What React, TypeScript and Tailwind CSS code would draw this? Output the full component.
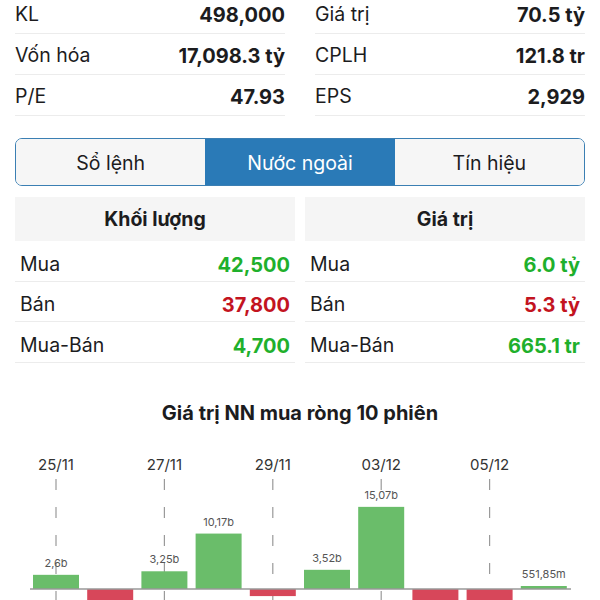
const stats = [
  [
    { label: 'KL', value: '498,000' },
    { label: 'Vốn hóa', value: '17,098.3 tỷ' },
    { label: 'P/E', value: '47.93' },
  ],
  [
    { label: 'Giá trị', value: '70.5 tỷ' },
    { label: 'CPLH', value: '121.8 tr' },
    { label: 'EPS', value: '2,929' },
  ],
];

const tabs = ['Sổ lệnh', 'Nước ngoài', 'Tín hiệu'];

type Row = { label: string; value: string; up: boolean };

const tables: { title: string; rows: Row[] }[] = [
  {
    title: 'Khối lượng',
    rows: [
      { label: 'Mua', value: '42,500', up: true },
      { label: 'Bán', value: '37,800', up: false },
      { label: 'Mua-Bán', value: '4,700', up: true },
    ],
  },
  {
    title: 'Giá trị',
    rows: [
      { label: 'Mua', value: '6.0 tỷ', up: true },
      { label: 'Bán', value: '5.3 tỷ', up: false },
      { label: 'Mua-Bán', value: '665.1 tr', up: true },
    ],
  },
];

const rowHeights = ['h-[41px]', 'h-[40px]', 'h-[41px]'];

const bars = [
  { v: 2.6, label: '2,6b' },
  { v: -4.2, label: '' },
  { v: 3.25, label: '3,25b' },
  { v: 10.17, label: '10,17b' },
  { v: -1.3, label: '' },
  { v: 3.52, label: '3,52b' },
  { v: 15.07, label: '15,07b' },
  { v: -4.8, label: '' },
  { v: -3.9, label: '' },
  { v: 0.55, label: '551,85m' },
];

const dates = ['25/11', '27/11', '29/11', '03/12', '05/12'];

function NetChart() {
  const zero = 157;
  const scale = 5.45;
  const step = 54.2;
  const barW = 46;
  return (
    <svg width={600} height={170} viewBox="0 0 600 170" className="block">
      {dates.map((d, i) => {
        const x = 56 + step * 2 * i;
        return (
          <g key={d}>
            <text x={x} y={38} textAnchor="middle" fontSize={15} fill="#333">
              {d}
            </text>
            <line x1={x} y1={47} x2={x} y2={170} stroke="#9a9a9a" strokeWidth={1.2} strokeDasharray="11 17" />
          </g>
        );
      })}
      {bars.map((b, i) => {
        const cx = 56 + step * i;
        const h = Math.abs(b.v) * scale;
        const y = b.v >= 0 ? zero - h : zero;
        return (
          <g key={i}>
            <rect x={cx - barW / 2} y={y} width={barW} height={h} fill={b.v >= 0 ? '#6abd6a' : '#d7475a'} />
            {b.label && (
              <text x={cx} y={zero - h - 8} textAnchor="middle" fontSize={11} fill="#555">
                {b.label}
              </text>
            )}
          </g>
        );
      })}
      <line x1={30} y1={zero} x2={571} y2={zero} stroke="#999" strokeWidth={1.5} />
    </svg>
  );
}

export default function App() {
  return (
    <div
      className="w-[600px] h-[600px] overflow-hidden bg-white text-[#1c1c1e]"
      style={{ fontFamily: 'Inter, "Noto Sans", sans-serif' }}
    >
      {/* Stats */}
      <div className="grid grid-cols-2 gap-x-[30px] px-[15px] -mt-[7px]">
        {stats.map((col, ci) => (
          <div key={ci}>
            {col.map((s) => (
              <div
                key={s.label}
                className="flex h-[41px] items-center justify-between border-b border-[#ececec] pt-[4px]"
              >
                <span className="text-[19.5px]">{s.label}</span>
                <span className="text-[20px] font-bold">{s.value}</span>
              </div>
            ))}
          </div>
        ))}
      </div>

      {/* Tabs */}
      <div className="mx-[15px] mt-[22px] flex h-[48px] overflow-hidden rounded-[7px] border-[1.5px] border-[#3b7fb3]">
        {tabs.map((t, i) => (
          <div
            key={t}
            className={
              i === 1
                ? 'flex flex-1 items-center justify-center bg-[#2a7ab7] pt-[4px] text-[19.5px] text-white'
                : 'flex flex-1 items-center justify-center bg-[#f6f6f6] pt-[4px] text-[19.5px] text-[#1c1c1e]'
            }
          >
            {t}
          </div>
        ))}
      </div>

      {/* Foreign tables */}
      <div className="mt-[11px] grid grid-cols-2 gap-x-[10px] px-[15px]">
        {tables.map((tb) => (
          <div key={tb.title}>
            <div className="flex h-[44px] items-center justify-center bg-[#f5f5f5] pt-[2px] text-[19.5px] font-bold">
              {tb.title}
            </div>
            {tb.rows.map((r, i) => (
              <div
                key={r.label}
                className={'flex items-center justify-between border-b border-[#ececec] px-[5px] pt-[7px] ' + rowHeights[i]}
              >
                <span className="text-[19.5px]">{r.label}</span>
                <span className={'text-[20px] font-bold ' + (r.up ? 'text-[#1fb02c]' : 'text-[#c3141f]')}>
                  {r.value}
                </span>
              </div>
            ))}
          </div>
        ))}
      </div>

      {/* Chart */}
      <div className="mt-[37px] text-center text-[20px] font-bold leading-[26px]">Giá trị NN mua ròng 10 phiên</div>
      <div className="mt-[6px]">
        <NetChart />
      </div>
    </div>
  );
}
